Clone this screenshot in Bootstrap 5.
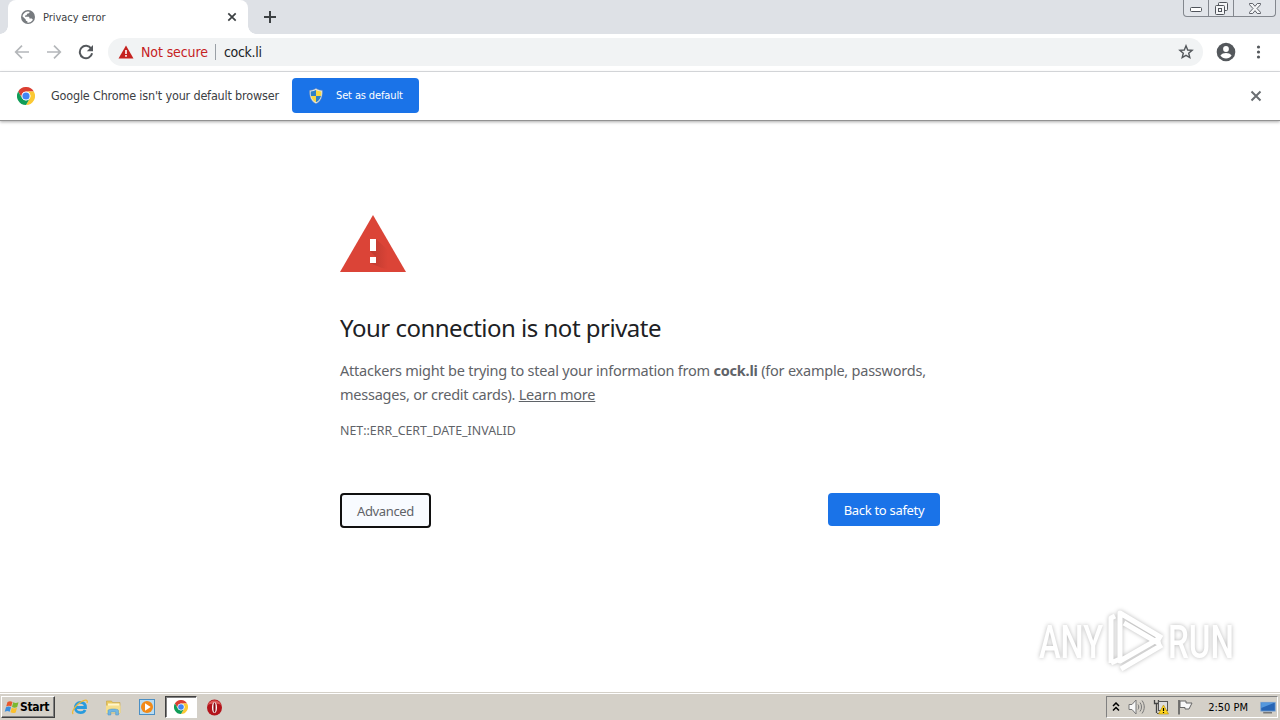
<!DOCTYPE html>
<html lang="en">
<head>
  <meta charset="UTF-8" />
  <meta name="viewport" content="width=device-width, initial-scale=1.0" />
  <title>Privacy error</title>
  <link href="https://cdn.jsdelivr.net/npm/bootstrap@5.3.0/dist/css/bootstrap.min.css" rel="stylesheet">
  <style>
    body { font-family: "Noto Sans", "Open Sans", sans-serif; color: #3c4043; }
    svg { display: block; flex: none; }
    .ui-text { font-family: "DejaVu Sans Condensed", "DejaVu Sans", sans-serif; font-stretch: condensed; white-space: nowrap; }

    /* tab strip */
    .tab-strip { height: 34px; background: #dee1e6; }
    .page-tab { width: 240px; margin-left: 8px; padding: 0 10px 0 13px; background: #fff; border-radius: 8px 8px 0 0; }
    .page-tab::before, .page-tab::after { content: ""; position: absolute; bottom: 0; width: 8px; height: 8px; }
    .page-tab::before { left: -8px; background: radial-gradient(circle at 0 0, #dee1e6 7.5px, #fff 8px); }
    .page-tab::after { right: -8px; background: radial-gradient(circle at 100% 0, #dee1e6 7.5px, #fff 8px); }
    .tab-title { font-size: 11px; width: 184px; margin-left: 8px; padding-top: 2px; letter-spacing: -.03px; }
    .win-buttons { height: 17px; margin-right: 4px; border: 1px solid #83878e; border-top: 0; border-radius: 0 0 4px 4px; background: #e2e5ea; }
    .win-buttons > span { width: 25px; border-right: 1px solid #83878e; }
    .win-buttons > span:last-child { width: 41px; border-right: 0; }

    /* toolbar */
    .tool-bar { height: 38px; padding: 0 13px 1px 14px; border-bottom: 1px solid #dadce0; }
    .address { height: 28px; margin-left: 14px; padding: 0 9px 0 10px; border-radius: 14px; background: #f1f3f4; font-size: 14px; }
    .address .warn { color: #c5221f; margin-left: 7px; letter-spacing: -.1px; }
    .address .sep { width: 1px; height: 16px; margin: 0 8px 0 7px; background: #9aa0a6; }
    .address .host { color: #202124; letter-spacing: -.3px; }
    .profile { margin-left: 9px; }

    /* default browser bar */
    .info-bar { height: 49px; padding: 0 18px 1px 17px; border-bottom: 1px solid #929292; box-shadow: 0 1px 3px #aaa; }
    .info-text { width: 241px; padding: 1px 0 0 16px; font-size: 12.5px; letter-spacing: -.18px; }
    .btn-blue { background: #1a73e8; color: #fff; border: 0; border-radius: 4px; }
    .btn-default-browser { width: 127px; height: 35px; padding: 1px 0 0 16px; font-size: 11px; letter-spacing: -.13px; }

    /* warning page */
    .warning-page { width: 600px; padding-top: 93px; color: #5f6368; }
    .warning-page h1 { margin: 39px 0 0; font-size: 24px; line-height: 34px; font-weight: 400; letter-spacing: -.5px; color: #202124; }
    .warning-page p { margin: 13px -10px 0 0; font-size: 14.5px; line-height: 24px; letter-spacing: -.23px; white-space: nowrap; }
    .warning-page a { color: inherit; }
    .err-code { margin-top: 15px; font-size: 12.4px; line-height: 20px; }
    .page-actions { margin-top: 52px; }
    .btn-advanced { width: 91px; height: 35px; padding: 2px 0 0; font-size: 13px; letter-spacing: -.35px; color: #5f6368; background: #f8fbff; border: 2px solid #101010; border-radius: 4px; }
    .btn-safety { width: 112px; height: 33px; padding: 3px 0 0; font-size: 13px; letter-spacing: -.3px; }

    /* watermark over the page */
    .watermark { right: 36px; bottom: 19px; filter: drop-shadow(0 0 2px rgba(0, 0, 0, .28)); }

    /* taskbar */
    .task-bar { height: 28px; padding: 2px 2px 1px 1px; background: #d4d0c8; border-top: 1px solid #d4d0c8; box-shadow: inset 0 1px #fff; }
    .start-btn { width: 54px; height: 22px; padding-left: 2px; border: 1px solid; border-color: #fff #404040 #404040 #fff; box-shadow: inset -1px -1px #808080; font-size: 12px; font-weight: 700; letter-spacing: -.3px; color: #000; }
    .launch { margin-left: 16px; }
    .launch-item { width: 34px; }
    .launch-item:last-child { width: 26px; }
    .launch-active { width: 32px; height: 22px; background: #fff; border: 1px solid; border-color: #404040 #fff #fff #404040; box-shadow: inset 1px 1px #808080; }
    .opera { margin-left: 7px; }
    .tray { width: 172px; height: 22px; padding: 0 1px 0 5px; border: 1px solid; border-color: #808080 #fff #fff #808080; color: #000; font-size: 11px; }
    .clock { padding-top: 2px; }
  </style>
</head>
<body class="vh-100 d-flex flex-column overflow-hidden bg-white">
  <!-- shared logo -->
  <svg width="0" height="0" class="position-absolute">
    <symbol id="chrome" viewBox="0 0 24 24">
      <circle cx="12" cy="12" r="12" fill="#fff" />
      <path fill="#db3f32" d="M1.6 6A12 12 0 0 1 22.4 6H12a6 6 0 0 0-5.2 9z" />
      <path fill="#fbc934" d="M22.4 6A12 12 0 0 1 12 24l5.2-9A6 6 0 0 0 12 6z" />
      <path fill="#109d58" d="M12 24A12 12 0 0 1 1.6 6l5.2 9a6 6 0 0 0 10.4 0z" />
      <circle cx="12" cy="12" r="5.7" fill="#fff" />
      <circle cx="12" cy="12" r="4.8" fill="#4285f4" />
    </symbol>
  </svg>

  <header class="tab-strip d-flex flex-shrink-0">
    <div class="page-tab position-relative d-flex align-items-center">
      <svg width="14" height="14" viewBox="0 0 14 14"><circle cx="7" cy="7" r="7" fill="#777b7f" /><path d="M8.5 1.7C8.8 3.3 7.5 3.5 6 3.7c0 1.5-.8 1.8-2 1.9v1.2h3.2c1 0 1.3.6 1.3 1.8h1.600c1 0 1.500.5 1.700 1.500A5.700 5.700 0 0 1 6.300 12.600v-1.500C5 11 4.800 10.300 4.700 9.400L1.400 6.200A5.700 5.700 0 0 1 8.500 1.700z" fill="#fff" /></svg>
      <span class="tab-title ui-text">Privacy error</span>
      <svg width="10" height="10" viewBox="0 0 10 10"><path d="M1.3 1.3l7.4 7.4M8.7 1.3L1.3 8.7" stroke="#3c4043" stroke-width="1.7" /></svg>
    </div>
    <svg class="align-self-center ms-3" width="12" height="12" viewBox="0 0 12 12"><path d="M6 0v12M0 6h12" stroke="#3c4043" stroke-width="2" /></svg>
    <div class="win-buttons d-flex ms-auto">
      <span class="d-flex justify-content-center align-items-end pb-1"><svg width="12" height="5"><rect x=".5" y=".5" width="11" height="4" rx="1" fill="#fff" stroke="#50545b" /></svg></span>
      <span class="d-flex justify-content-center align-items-center"><svg width="13" height="13" fill="#f4f5f7" stroke="#50545b"><rect x="3.5" y=".5" width="9" height="8" rx="1" /><rect x=".5" y="3.5" width="9" height="9" rx="1" /><rect x="3.5" y="6.5" width="3" height="3" /></svg></span>
      <span class="d-flex justify-content-center align-items-center"><svg width="12" height="11"><path d="M.5.5h3.2L6 3.3 8.3.5h3.2v1.2L8 5.5l3.5 3.8v1.2H8.3L6 7.7l-2.3 2.8H.5V9.3L4 5.5.5 1.7z" fill="#f4f5f7" stroke="#50545b" stroke-width=".9" /></svg></span>
    </div>
  </header>

  <nav class="tool-bar d-flex align-items-center flex-shrink-0">
    <svg width="16" height="16" viewBox="0 0 16 16" fill="none" stroke="#b4b7ba" stroke-width="1.7"><path d="M15 8H2M8 1.7L1.7 8 8 14.3" /></svg>
    <svg class="ms-3" width="16" height="16" viewBox="0 0 16 16" fill="none" stroke="#b4b7ba" stroke-width="1.7"><path d="M1 8h13M8 1.7L14.3 8 8 14.3" /></svg>
    <svg class="ms-3" width="16" height="16" viewBox="0 0 16 16"><path d="M13.2 4.6A6.2 6.2 0 1 0 14.1 9.3" fill="none" stroke="#54585c" stroke-width="2" /><path d="M15 1v6.2H8.8z" fill="#54585c" /></svg>
    <div class="address d-flex align-items-center flex-grow-1 ui-text">
      <svg width="16" height="14" viewBox="0 0 16 14"><path d="M8 .5L15.5 13.5H.5z" fill="#c5221f" /><path d="M8 5v4M8 10v1.8" stroke="#fff" stroke-width="1.6" /></svg>
      <span class="warn">Not secure</span>
      <span class="sep"></span>
      <span class="host">cock.li</span>
      <svg class="ms-auto" width="16" height="16" viewBox="0 0 16 16"><path d="M8 1.8l1.7 4.2 4.4.3-3.4 2.9 1.1 4.4L8 11.3l-3.8 2.3 1.1-4.4L1.9 6.3 6.3 6z" fill="none" stroke="#54585c" stroke-width="1.4" /></svg>
    </div>
    <svg class="profile" width="28" height="20" viewBox="0 0 28 20"><circle cx="14" cy="10" r="9.3" fill="#54585c" /><circle cx="14" cy="7" r="2.9" fill="#fff" /><path d="M8.4 13.6c1.2-2 3.3-2.7 5.6-2.7s4.4.7 5.6 2.7c-1.3 1.8-3.3 2.9-5.6 2.9s-4.3-1.1-5.6-2.9z" fill="#fff" /></svg>
    <svg class="profile" width="18" height="14" viewBox="0 0 18 14" fill="#54585c"><circle cx="9.5" cy="2" r="1.6" /><circle cx="9.5" cy="7" r="1.6" /><circle cx="9.5" cy="12" r="1.6" /></svg>
  </nav>

  <div class="info-bar d-flex align-items-center flex-shrink-0">
    <svg width="18" height="18"><use href="#chrome" /></svg>
    <span class="info-text ui-text">Google Chrome isn't your default browser</span>
    <button class="btn btn-blue btn-default-browser d-flex align-items-center ms-3 ui-text">
      <svg width="16" height="16" viewBox="0 0 16 16"><path d="M8 .5c2 1.3 4 1.8 6.3 1.9C14.6 9 12.6 13.5 8 15.6 3.4 13.5 1.4 9 1.7 2.4 4 2.3 6 1.8 8 .5z" fill="#e8edf0" stroke="#8a93a0" stroke-width=".5" /><path d="M8 2v6H3C2.7 6.5 2.6 5 2.7 3.5 4.7 3.4 6.4 2.9 8 2zM8 8h5c-.7 2.8-2.3 5-5 6.3z" fill="#2c80c8" /><path d="M8 2c1.6.9 3.3 1.4 5.3 1.5.1 1.5 0 3-.3 4.5H8zM8 8H3c.7 2.8 2.3 5 5 6.3z" fill="#f6d743" /></svg>
      <span class="ms-2 ps-1">Set as default</span>
    </button>
    <svg class="ms-auto" width="12" height="12" viewBox="0 0 12 12"><path d="M1.5 1.5l9 9M10.5 1.5l-9 9" stroke="#6a6e72" stroke-width="2" /></svg>
  </div>

  <main class="flex-grow-1 position-relative">
    <div class="warning-page mx-auto">
      <svg width="66" height="58" viewBox="0 0 66 58">
        <defs><linearGradient id="shade" x1="0" y1="0" x2="1" y2="0"><stop offset="0" stop-color="#a8332a" stop-opacity=".6" /><stop offset="1" stop-color="#a8332a" stop-opacity="0" /></linearGradient></defs>
        <path d="M33 1l33 57H0z" fill="#db4437" />
        <path d="M36 25l12 11v19l-6-1-12-5 6-6-6-6z" fill="url(#shade)" />
        <path d="M30 25h6v12h-6zM30 43h6v6h-6z" fill="#fff" />
      </svg>
      <h1>Your connection is not private</h1>
      <p>Attackers might be trying to steal your information from <strong>cock.li</strong> (for example, passwords,<br>messages, or credit cards). <a href="#">Learn more</a></p>
      <div class="err-code">NET::ERR_CERT_DATE_INVALID</div>
      <div class="page-actions d-flex justify-content-between align-items-start">
        <button class="btn btn-advanced">Advanced</button>
        <button class="btn btn-blue btn-safety">Back to safety</button>
      </div>
    </div>
    <svg class="watermark position-absolute" width="208" height="64" viewBox="0 0 208 64" fill="#fff">
      <text x="3" y="49" font-family="Roboto, sans-serif" font-size="47" font-weight="500" textLength="64" lengthAdjust="spacingAndGlyphs">ANY</text>
      <text x="132" y="49" font-family="Roboto, sans-serif" font-size="47" font-weight="500" textLength="66" lengthAdjust="spacingAndGlyphs">RUN</text>
      <path d="M75 54V9l4-2M84 34V4l42 25M88 14l36 21M84 25v27l40-23M85 60l41-24M75 54l9-4" fill="none" stroke="#fff" stroke-width="5" stroke-linejoin="round" />
    </svg>
  </main>

  <footer class="task-bar d-flex align-items-center flex-shrink-0 ui-text">
    <div class="start-btn d-flex align-items-center">
      <svg width="16" height="16" viewBox="0 0 15 16"><path d="M3 3c2-1.3 3.5-1 5 0L6.7 7.5c-1.5-1-3-1-5 0z" fill="#e8582c" /><path d="M8.7 3.3c1.7 1 3.3 1 5.3 0L12.7 8c-1.8 1-3.5.9-5.2-.1z" fill="#7cb82f" /><path d="M1.5 8.3c1.9-1 3.5-1 5 0L5.2 12.7c-1.5-1-3-1-5 0z" fill="#3a8ede" /><path d="M7.2 8.8c1.7 1 3.3 1 5.3 0l-1.3 4.6c-1.8 1-3.5.9-5.2-.1z" fill="#fbc02d" /></svg>
      <span>Start</span>
    </div>
    <div class="launch d-flex align-items-center">
      <span class="launch-item"><svg width="18" height="18" viewBox="0 0 18 18" fill="none"><path d="M4.5 9.5h10c0-3.2-2-5.2-5-5.2S4.300 6.700 4.300 9.700s2.200 5 5.200 5c2.200 0 3.800-1 4.600-2.700" stroke="#299bdd" stroke-width="2.8" /><path d="M2.2 16c-2.500-2 3-9.500 8-12.300 4-2.300 7-2.300 5.800 1.300" stroke="#efb935" stroke-width="1.3" /></svg></span>
      <span class="launch-item"><svg width="17" height="17" viewBox="0 0 17 17"><path d="M1.5 2h5l1 1.5h7.500V14H1.500z" fill="#e9c85f" stroke="#c8a444" stroke-width=".6" /><path d="M3 4.500h11.500V8H3z" fill="#fff6cc" /><path d="M1 6.500h14.500V14H1z" fill="#f6df8d" /><path d="M3 16v-4.500c0-2 10.500-2 10.500 0V16h-2.800v-3H5.800v3z" fill="#72b7e3" stroke="#4a91c0" stroke-width=".5" /></svg></span>
      <span class="launch-item"><svg width="17" height="17" viewBox="0 0 17 17"><rect x=".5" y=".5" width="15" height="15" fill="#b9dcf2" stroke="#4b8fc4" /><circle cx="8" cy="8" r="6" fill="#f28a18" /><path d="M6 4.300L11.700 8 6 11.700z" fill="#fff" /></svg></span>
    </div>
    <div class="launch-active d-flex align-items-center justify-content-center"><svg width="14" height="14"><use href="#chrome" /></svg></div>
    <svg class="opera" width="20" height="17" viewBox="0 0 20 17"><ellipse cx="10.5" cy="8.5" rx="7.5" ry="8" fill="#b3141b" /><path d="M4 6c1-6 12-6 13 0-3-2-10-2-13 0z" fill="#dc5a58" /><ellipse cx="10.5" cy="8.5" rx="2.5" ry="5.6" fill="#fff" /><ellipse cx="10.5" cy="8.5" rx="1.1" ry="5" fill="#8b0a12" /></svg>
    <div class="tray d-flex align-items-center ms-auto">
      <svg width="8" height="10" viewBox="0 0 8 10" fill="none" stroke="#000" stroke-width="1.5"><path d="M1 4l3-3 3 3M1 8.5l3-3 3 3" /></svg>
      <svg class="ms-2" width="17" height="16" viewBox="0 0 17 16"><path d="M1 5.5h3l4-4.5v14l-4-4.5H1z" fill="#f8f8f8" stroke="#777" /><path d="M10 5.5c1 1.5 1 3.5 0 5M12 3.5c2 2.5 2 6.500 0 9M14 1.500c3 4 3 9 0 13" fill="none" stroke="#777" /></svg>
      <svg class="ms-2" width="16" height="16" viewBox="0 0 16 16"><path d="M1.5 1v3.5h4V1M3.5 4.5V14" fill="none" stroke="#444" stroke-width="1.3" /><rect x="5.5" y="2.5" width="9" height="9" fill="#ddd" stroke="#555" /><path d="M4 14.5h7" stroke="#555" /><path d="M10.5 6l5 9h-10z" fill="#ffd51f" stroke="#b48900" stroke-width=".6" /><path d="M10.5 9v3M10.5 13v1" stroke="#000" stroke-width="1.2" /></svg>
      <svg class="ms-2" width="17" height="16" viewBox="0 0 17 16"><path d="M2 1v14.5" stroke="#555" stroke-width="1.5" /><path d="M3 2h6v2h6l-3 6H8V8.5H3z" fill="#f8f8f8" stroke="#666" /></svg>
      <span class="clock ms-auto">2:50 PM</span>
      <svg class="ms-2 ps-1" width="20" height="17" viewBox="0 0 20 17"><rect x="1" y="2" width="18" height="11" fill="#2765b5" stroke="#7ea7d6" /><path d="M1.5 2.5H18L1.5 9z" fill="#5598dd" /><path d="M4 15h11" stroke="#777" stroke-width="2" /></svg>
    </div>
  </footer>
  <script src="https://cdn.jsdelivr.net/npm/bootstrap@5.3.0/dist/js/bootstrap.bundle.min.js"></script>
</body>
</html>
